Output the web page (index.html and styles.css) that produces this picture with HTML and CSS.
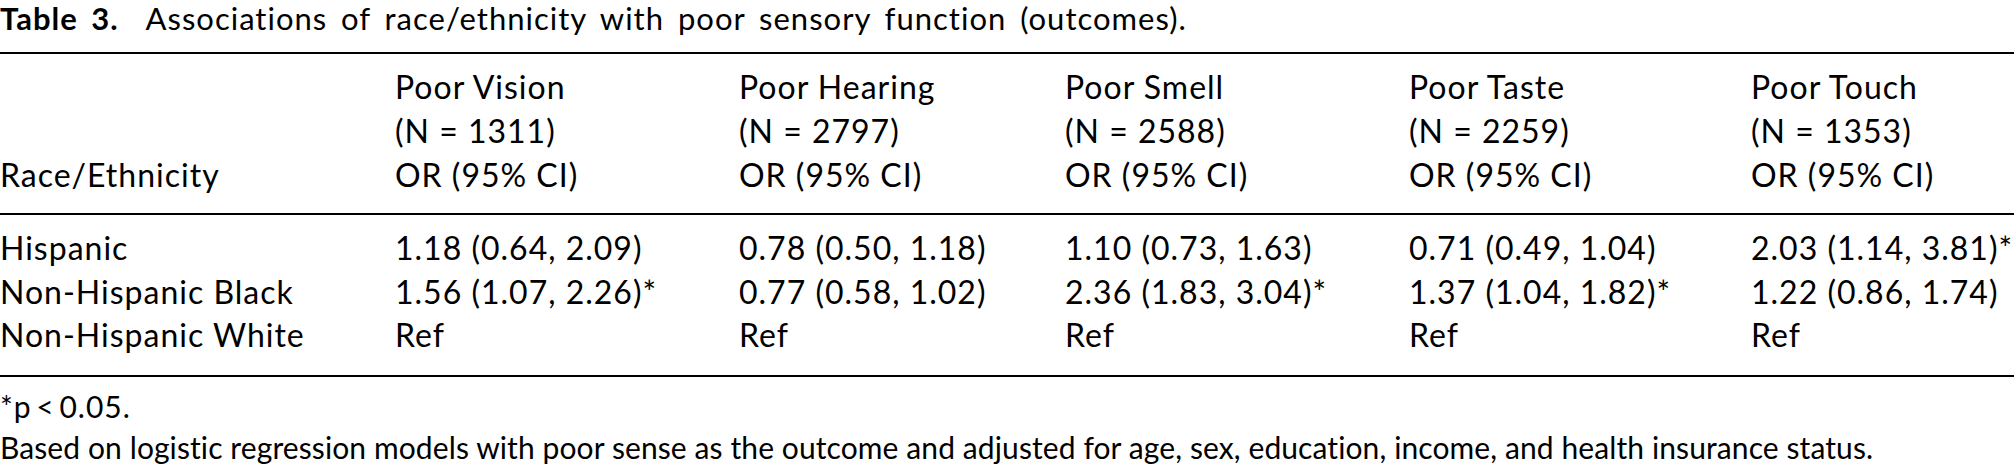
FILE: index.html
```html
<!DOCTYPE html>
<html lang="en">
<head>
<meta charset="utf-8">
<title>Table 3</title>
<link rel="stylesheet" href="styles.css">
</head>
<body>
<div class="caption"><span class="label">Table 3.</span>&nbsp; Associations of race/ethnicity with poor sensory function (outcomes).</div>
<div class="rule"></div>
<div class="grid head">
  <div class="cell rowlabel">Race/Ethnicity</div>
  <div class="cell"><div>Poor Vision</div><div>(N = 1311)</div><div>OR (95% CI)</div></div>
  <div class="cell"><div>Poor Hearing</div><div>(N = 2797)</div><div>OR (95% CI)</div></div>
  <div class="cell"><div>Poor Smell</div><div>(N = 2588)</div><div>OR (95% CI)</div></div>
  <div class="cell"><div>Poor Taste</div><div>(N = 2259)</div><div>OR (95% CI)</div></div>
  <div class="cell"><div>Poor Touch</div><div>(N = 1353)</div><div>OR (95% CI)</div></div>
</div>
<div class="rule"></div>
<div class="grid body">
  <div class="cell">Hispanic</div>
  <div class="cell">1.18 (0.64, 2.09)</div>
  <div class="cell">0.78 (0.50, 1.18)</div>
  <div class="cell">1.10 (0.73, 1.63)</div>
  <div class="cell">0.71 (0.49, 1.04)</div>
  <div class="cell">2.03 (1.14, 3.81)*</div>

  <div class="cell">Non-Hispanic Black</div>
  <div class="cell">1.56 (1.07, 2.26)*</div>
  <div class="cell">0.77 (0.58, 1.02)</div>
  <div class="cell">2.36 (1.83, 3.04)*</div>
  <div class="cell">1.37 (1.04, 1.82)*</div>
  <div class="cell">1.22 (0.86, 1.74)</div>

  <div class="cell">Non-Hispanic White</div>
  <div class="cell">Ref</div>
  <div class="cell">Ref</div>
  <div class="cell">Ref</div>
  <div class="cell">Ref</div>
  <div class="cell">Ref</div>
</div>
<div class="rule"></div>
<div class="notes">
  <p class="sig">*p&thinsp;&lt;&thinsp;0.05.</p>
  <p>Based on logistic regression models with poor sense as the outcome and adjusted for age, sex, education, income, and health insurance status.</p>
</div>
</body>
</html>
```

FILE: styles.css
```css
html, body {
  margin: 0;
  padding: 0;
  background: #ffffff;
}

body {
  font-family: Lato, "Open Sans", "DejaVu Sans", sans-serif;
  font-size: 32px;
  color: #000000;
  width: 2014px;
}

.caption {
  font-size: 31px;
  line-height: 37px;
  white-space: nowrap;
  letter-spacing: 1px;
  word-spacing: 5px;
}

.caption .label {
  font-weight: 700;
}

.rule {
  height: 2px;
  background: #000000;
}

.caption + .rule {
  margin-top: 15px;
}

.grid {
  display: grid;
  grid-template-columns: 395px 344px 326px 344px 342px 1fr;
  white-space: nowrap;
  letter-spacing: 1px;
}

.head {
  line-height: 44px;
  padding: 11px 0 16px;
}

.head .rowlabel {
  align-self: end;
}

.body {
  line-height: 43.5px;
  padding: 11px 0 18px;
}

.notes {
  padding-top: 9px;
  line-height: 41px;
  font-size: 30px;
  letter-spacing: 0.1px;
}

.notes p {
  margin: 0;
  white-space: nowrap;
}

.notes .sig {
  letter-spacing: 1px;
}
```
